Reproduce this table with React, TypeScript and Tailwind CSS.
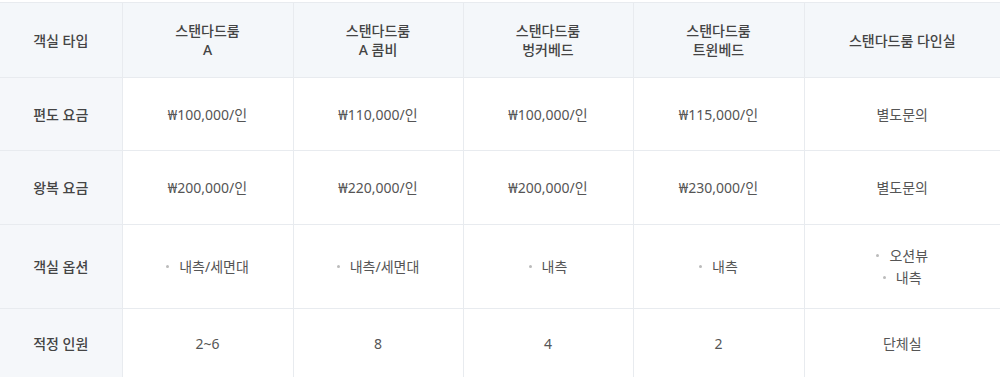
import React from 'react';

const columns = [
  ['스탠다드룸', 'A'],
  ['스탠다드룸', 'A 콤비'],
  ['스탠다드룸', '벙커베드'],
  ['스탠다드룸', '트윈베드'],
  ['스탠다드룸 다인실'],
];

const rows: { label: string; cells: (string | string[])[]; h: string }[] = [
  { label: '편도 요금', cells: ['₩100,000/인', '₩110,000/인', '₩100,000/인', '₩115,000/인', '별도문의'], h: 'h-[73px]' },
  { label: '왕복 요금', cells: ['₩200,000/인', '₩220,000/인', '₩200,000/인', '₩230,000/인', '별도문의'], h: 'h-[74px]' },
  { label: '객실 옵션', cells: [['내측/세면대'], ['내측/세면대'], ['내측'], ['내측'], ['오션뷰', '내측']], h: 'h-[84px]' },
  { label: '적정 인원', cells: ['2~6', '8', '4', '2', '단체실'], h: 'h-[70px]' },
];

const widths = ['w-[122px]', 'w-[171px]', 'w-[170px]', 'w-[170px]', 'w-[171px]', 'w-[196px]'];

export default function App() {
  return (
    <div className="w-[1000px] h-[377px] overflow-hidden bg-white pt-[2px] font-['Noto_Sans','Noto_Sans_CJK_KR',sans-serif]">
      <table className="w-full table-fixed border-collapse text-[14px]">
        <colgroup>
          {widths.map((w, i) => (
            <col key={i} className={w} />
          ))}
        </colgroup>
        <thead>
          <tr className="h-[75px] bg-[#f4f7fa] border-t border-[#e8ebef]">
            <th className="border-r border-[#e8ebef] font-medium text-[#444] leading-[19px]">객실 타입</th>
            {columns.map((c, i) => (
              <th
                key={i}
                className={`font-medium text-[#444] leading-[19px] ${i < 4 ? 'border-r border-[#e8ebef]' : ''}`}
              >
                {c.map((line, j) => (
                  <div key={j}>{line}</div>
                ))}
              </th>
            ))}
          </tr>
        </thead>
        <tbody>
          {rows.map((r) => (
            <tr key={r.label} className={`${r.h} border-t border-[#e8ebef]`}>
              <td className="bg-[#f5f7fa] border-r border-[#e8ebef] text-center font-medium text-[#444]">{r.label}</td>
              {r.cells.map((c, i) => (
                <td
                  key={i}
                  className={`text-center text-[#555] ${i < 4 ? 'border-r border-[#e8ebef]' : ''}`}
                >
                  {Array.isArray(c) ? (
                    <div className="flex flex-col items-center gap-[2px] leading-[20px]">
                      {c.map((item) => (
                        <div key={item} className="flex items-center">
                          <span className="mr-[10px] inline-block h-[3px] w-[3px] rounded-full bg-[#bbb]" />
                          {item}
                        </div>
                      ))}
                    </div>
                  ) : (
                    c
                  )}
                </td>
              ))}
            </tr>
          ))}
        </tbody>
      </table>
    </div>
  );
}
